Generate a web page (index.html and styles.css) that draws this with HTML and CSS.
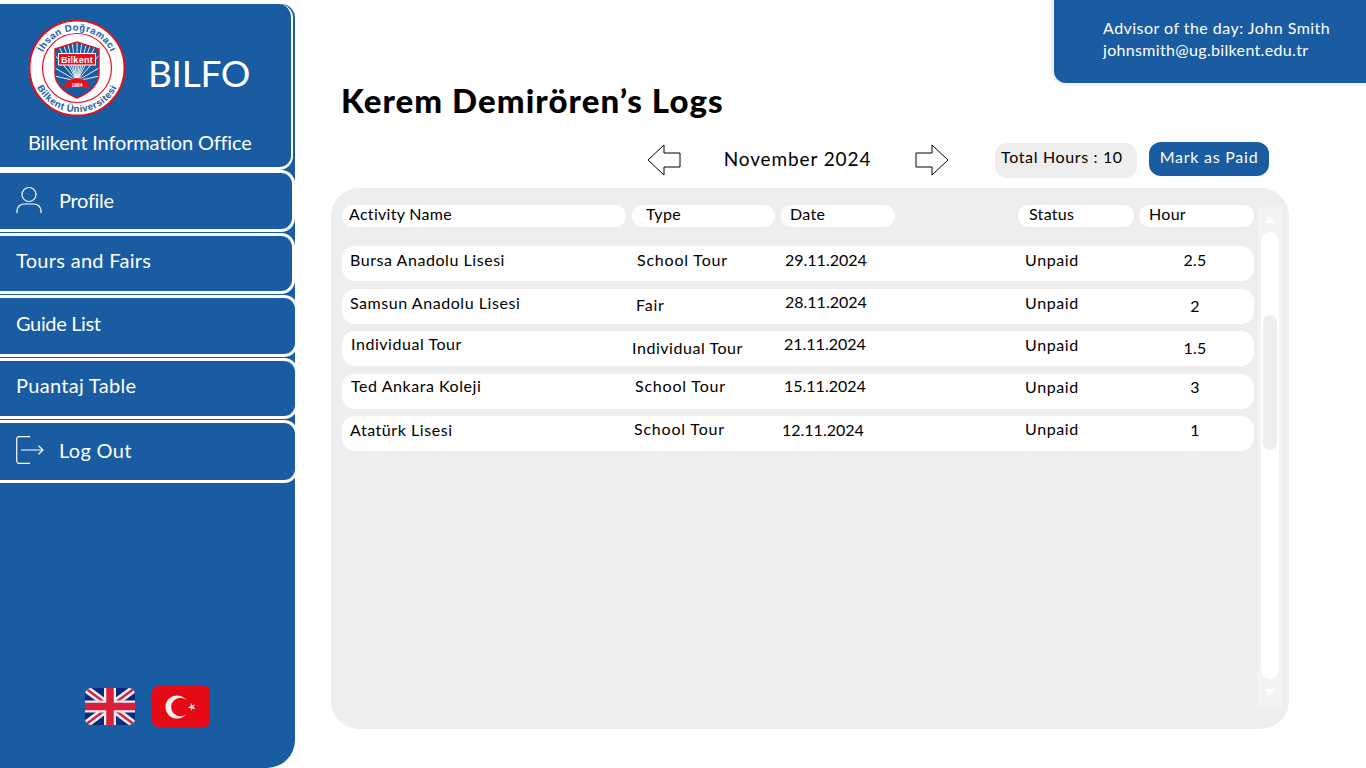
FILE: index.html
```html
<!DOCTYPE html>
<html lang="en">
<head>
  <meta charset="UTF-8">
  <meta name="viewport" content="width=device-width, initial-scale=1.0">
  <title>Kerem Demirören's Logs</title>
  <link rel="stylesheet" href="styles.css">
</head>
<body>
  <div class="page">
    <aside class="sidebar">
      <div class="brand">
        <div class="brand-top">
          <svg class="logo" viewBox="0 0 98 98">
            <defs>
              <path id="arcTop" d="M15.5 66a37.5 37.5 0 1 1 67 0"/>
              <path id="arcBottom" d="M5.5 58a44.5 44.5 0 0 0 87 0"/>
              <clipPath id="shieldClip"><path d="M27 30l22-7 22 7v24c0 12-10 20-22 25-12-5-22-13-22-25z"/></clipPath>
            </defs>
            <circle cx="49" cy="49" r="47.5" fill="#fff" stroke="#e3101f" stroke-width="2"/>
            <circle cx="49" cy="49" r="34.5" fill="#fff" stroke="#e3101f" stroke-width="1.2"/>
            <text class="logo-arc"><textPath href="#arcTop" startOffset="50%" text-anchor="middle">İhsan Doğramacı</textPath></text>
            <text class="logo-arc"><textPath href="#arcBottom" startOffset="50%" text-anchor="middle">Bilkent Üniversitesi</textPath></text>
            <path d="M27 30l22-7 22 7v24c0 12-10 20-22 25-12-5-22-13-22-25z" fill="#1a5ca2"/>
            <g clip-path="url(#shieldClip)" stroke="#fff" stroke-width=".9">
              <path d="M49 62V22M49 62L44 22M49 62L54 22M49 62L39 22M49 62L59 22M49 62L34 22M49 62L64 22M49 62L29 24M49 62L69 24M49 62L25 34M49 62L73 34M49 62L22 46M49 62L76 46M49 62L22 56M49 62L76 56"/>
              <path d="M27 69h44v12H27z" fill="#1a5ca2" stroke="none"/>
            </g>
            <path d="M36 69a13 10 0 0 1 26 0z" fill="#e3101f"/>
            <text class="logo-year" x="49" y="67.5" text-anchor="middle">1984</text>
            <rect x="30.5" y="34.5" width="37" height="11.5" fill="#e3101f" stroke="#fff" stroke-width="1"/>
            <text class="logo-name" x="49" y="43.5" text-anchor="middle">Bilkent</text>
            <path d="M27 30l22-7 22 7v24c0 12-10 20-22 25-12-5-22-13-22-25z" fill="none" stroke="#e3101f" stroke-width="1.4"/>
          </svg>
          <span class="brand-name">BILFO</span>
        </div>
        <div class="brand-sub">Bilkent Information Office</div>
      </div>

      <a class="nav-item nav-profile">
        <svg class="nav-icon" viewBox="0 0 28 28">
          <circle cx="13" cy="8.5" r="7"/>
          <path d="M1 27v-3a7 7 0 0 1 7-6h10a7 7 0 0 1 7 6v3"/>
        </svg>
        Profile
      </a>
      <a class="nav-item nav-tours">Tours and Fairs</a>
      <a class="nav-item nav-guide">Guide List</a>
      <a class="nav-item nav-table">Puantaj Table</a>
      <a class="nav-item nav-logout">
        <svg class="nav-icon" viewBox="0 0 28 28">
          <path d="M14 .7H3A2.3 2.3 0 0 0 .7 3v22A2.3 2.3 0 0 0 3 27.3h11"/>
          <path d="M5 14h22M22.5 9.8L27 14l-4.500 4.200"/>
        </svg>
        Log Out
      </a>

      <div class="flags">
        <svg class="flag-uk" viewBox="0 0 50 37">
          <defs><clipPath id="ukClip"><rect width="50" height="37" rx="6"/></clipPath></defs>
          <g clip-path="url(#ukClip)">
            <rect width="50" height="37" fill="#0b2a7c"/>
            <path d="M0 0L50 37M50 0L0 37" stroke="#eeeeee" stroke-width="7.5"/>
            <path d="M0 0L50 37M50 0L0 37" stroke="#d91f3c" stroke-width="2.4"/>
            <path d="M25 0V37M0 18.5H50" stroke="#eeeeee" stroke-width="12"/>
            <path d="M25 0V37M0 18.5H50" stroke="#d91f3c" stroke-width="7.5"/>
          </g>
        </svg>
        <svg class="flag-tr" viewBox="0 0 58 41">
          <rect width="58" height="41" rx="6" fill="#e60a17"/>
          <circle cx="25" cy="21" r="11.5" fill="#eeeeee"/>
          <circle cx="28.5" cy="21" r="9.3" fill="#e60a17"/>
          <path d="M39 17l1.300 2.500 2.700-1.200-1.500 2.500 1.900 2.100-2.800-.4-1.500 2.400-.4-2.800-2.800-.6 2.600-1.300z" fill="#eeeeee"/>
        </svg>
      </div>
    </aside>

    <main class="content">
      <div class="advisor">
        <div>Advisor of the day: John Smith</div>
        <div class="advisor-mail">johnsmith@ug.bilkent.edu.tr</div>
      </div>

      <h1 class="title">Kerem Demirören’s Logs</h1>

      <div class="toolbar">
        <svg class="arrow" viewBox="0 0 34 32"><path d="M1 16L17 1v8h16v14H17v8z"/></svg>
        <div class="month">November 2024</div>
        <svg class="arrow" viewBox="0 0 34 32"><path d="M33 16L17 1v8H1v14h16v8z"/></svg>
        <div class="total">Total Hours : 10</div>
        <button class="paid-btn">Mark as Paid</button>
      </div>

      <section class="panel">
        <div class="table">
          <div class="head-row">
            <div class="head-cell head-name">Activity Name</div>
            <div class="head-cell head-type">Type</div>
            <div class="head-cell head-date">Date</div>
            <div class="head-cell head-status">Status</div>
            <div class="head-cell head-hour">Hour</div>
          </div>

          <div class="row">
            <div class="cell name">Bursa Anadolu Lisesi</div>
            <div class="cell type">School Tour</div>
            <div class="cell date">29.11.2024</div>
            <div class="cell status">Unpaid</div>
            <div class="cell hour">2.5</div>
          </div>
          <div class="row">
            <div class="cell name">Samsun Anadolu Lisesi</div>
            <div class="cell type mid nudge-1">Fair</div>
            <div class="cell date">28.11.2024</div>
            <div class="cell status">Unpaid</div>
            <div class="cell hour low">2</div>
          </div>
          <div class="row">
            <div class="cell name high nudge-right">Individual Tour</div>
            <div class="cell type low tight nudge-5">Individual Tour</div>
            <div class="cell date high nudge-1">21.11.2024</div>
            <div class="cell status">Unpaid</div>
            <div class="cell hour low">1.5</div>
          </div>
          <div class="row">
            <div class="cell name higher nudge-right">Ted Ankara Koleji</div>
            <div class="cell type higher nudge-2">School Tour</div>
            <div class="cell date higher nudge-1">15.11.2024</div>
            <div class="cell status high">Unpaid</div>
            <div class="cell hour high">3</div>
          </div>
          <div class="row">
            <div class="cell name">Atatürk Lisesi</div>
            <div class="cell type high nudge-3">School Tour</div>
            <div class="cell date nudge-3">12.11.2024</div>
            <div class="cell status high">Unpaid</div>
            <div class="cell hour">1</div>
          </div>
        </div>

        <div class="scrollbar">
          <div class="scroll-up"></div>
          <div class="scroll-track"><div class="scroll-thumb"></div></div>
          <div class="scroll-down"></div>
        </div>
      </section>
    </main>
  </div>
</body>
</html>
```

FILE: styles.css
```css
* { box-sizing: border-box; }
html, body { margin: 0; height: 100%; background: white; }
body { font-family: Lato, "Noto Sans", sans-serif; color: black; overflow: hidden; }
.page { display: flex; width: 1366px; height: 768px; overflow: hidden; }

/* sidebar */
.sidebar { width: 295px; height: 764px; margin-top: 4px; flex: none; display: flex; flex-direction: column; background: #1a5ca2; border-radius: 0 14px 28px 0; color: white; }
.brand { width: 293px; height: 166px; padding: 15px 0 0 28px; border: solid white; border-width: 0 2px 3px 0; border-radius: 0 14px 14px 0; }
.brand-top { display: flex; align-items: center; gap: 22px; }
.logo { width: 98px; height: 98px; }
.logo-arc { font: bold 9.6px "Liberation Sans", sans-serif; fill: #1a5ca2; letter-spacing: .5px; }
.logo-year { font: bold 5px "Liberation Sans", sans-serif; fill: white; }
.logo-name { font: bold 9px "Liberation Sans", sans-serif; fill: white; letter-spacing: .3px; }
.brand-name { font-size: 37px; line-height: 44px; margin-top: 9px; letter-spacing: -.3px; }
.brand-sub { font-size: 20px; line-height: 24px; margin-top: 13px; letter-spacing: -.17px; }

.nav-item { display: flex; align-items: center; gap: 15px; height: 61.5px; padding-left: 16px; padding-bottom: 6px; margin-bottom: 1px; font-size: 20px; letter-spacing: .3px; border: solid white; border-width: 3px 3px 3px 0; border-radius: 0 14px 14px 0; }
.nav-guide, .nav-table, .nav-logout { width: 298px; }
.nav-profile { padding-bottom: 2px; letter-spacing: -.3px; }
.nav-guide { letter-spacing: -.35px; }
.nav-table { padding-bottom: 7px; }
.nav-logout { height: 62.5px; padding-bottom: 2px; }
.nav-icon { width: 28px; height: 28px; fill: none; stroke: white; stroke-width: 1.2; }
.flags { display: flex; align-items: center; gap: 17px; margin-top: auto; margin-bottom: 41px; padding-left: 85px; }
.flag-uk { width: 50px; height: 37px; }
.flag-tr { width: 58px; height: 41px; }

/* main */
.content { flex: 1; min-width: 0; padding-left: 36px; }
.advisor { width: 312px; height: 83px; margin-left: 723px; padding: 17px 0 0 49px; background: #1a5ca2; color: white; font-size: 16px; line-height: 22px; letter-spacing: .47px; border-radius: 0 0 0 12px; box-shadow: 0 0 0 3px #eef3f8; }
.advisor-mail { letter-spacing: .33px; }
.title { margin: -2px 0 0 10px; font-size: 33px; line-height: 38px; font-weight: 900; letter-spacing: 1.05px; }
.toolbar { display: flex; align-items: center; height: 38px; margin-top: 22px; padding-left: 316px; }
.arrow { width: 34px; height: 32px; flex: none; fill: white; stroke: black; stroke-width: 1; }
.month { width: 235px; margin-left: -1px; padding-bottom: 4px; flex: none; text-align: center; font-size: 19px; letter-spacing: .9px; }
.total { width: 142px; height: 35px; margin-left: 46px; padding: 4px 0 0 6px; background: #eeeeee; border-radius: 12px; font-size: 16px; letter-spacing: .65px; flex: none; }
.paid-btn { width: 120px; height: 34px; margin: -3px 0 0 12px; padding: 0 0 5px; background: #1a5ca2; color: white; border: 0; border-radius: 12px; font: inherit; font-size: 16px; letter-spacing: .75px; flex: none; }

.panel { display: flex; width: 958px; height: 541px; margin-top: 9px; padding: 17px 0 0 11px; background: #eeeeee; border-radius: 28px; }
.table { width: 912px; flex: none; }
.head-row, .row { display: grid; grid-template-columns: 290px 149px 237px 121px 115px; }
.head-row { margin-bottom: 19px; }
.head-cell { height: 22px; background: white; border-radius: 11px; font-size: 16px; line-height: 17px; letter-spacing: .3px; }
.head-name { width: 284px; padding-left: 7px; }
.head-type { width: 143px; padding-left: 14px; }
.head-date { width: 114px; padding-left: 9px; }
.head-status { width: 116px; padding-left: 11px; }
.head-hour { width: 115px; padding-left: 10px; }

.row { height: 35px; margin-bottom: 7.5px; align-items: center; background: white; border-radius: 13px; }
.cell { padding-bottom: 7px; font-size: 16px; line-height: 20px; letter-spacing: .3px; white-space: nowrap; }
.name { padding-left: 8px; letter-spacing: .55px; }
.type { padding-left: 5px; letter-spacing: .8px; }
.date { padding-left: 4px; padding-bottom: 8px; letter-spacing: 0; }
.status { padding-left: 7px; letter-spacing: .6px; }
.hour { width: 112px; text-align: center; }
.tight { letter-spacing: .55px; }

/* rows are not quite level in the design */
.cell.low { padding-bottom: 1px; }
.cell.mid { padding-bottom: 3px; }
.cell.high { padding-bottom: 9px; }
.cell.higher { padding-bottom: 11px; }
.nudge-1 { margin-left: -1px; }
.nudge-2 { margin-left: -2px; }
.nudge-3 { margin-left: -3px; }
.nudge-5 { margin-left: -5px; }
.nudge-right { margin-left: 1px; }

/* scrollbar */
.scrollbar { width: 24px; height: 500px; margin: 2px 0 0 4px; flex: none; display: flex; flex-direction: column; align-items: center; background: #f3f3f3; }
.scroll-up, .scroll-down { width: 0; height: 0; border-left: 5px solid transparent; border-right: 5px solid transparent; }
.scroll-up { margin: 9px 0 9px; border-bottom: 7px solid white; }
.scroll-down { margin: 10px 0 0; border-top: 7px solid white; }
.scroll-track { width: 18px; height: 447px; padding: 83px 2px 0; background: white; border-radius: 9px; }
.scroll-thumb { height: 135px; background: #eeeeee; border-radius: 7px; }
```
